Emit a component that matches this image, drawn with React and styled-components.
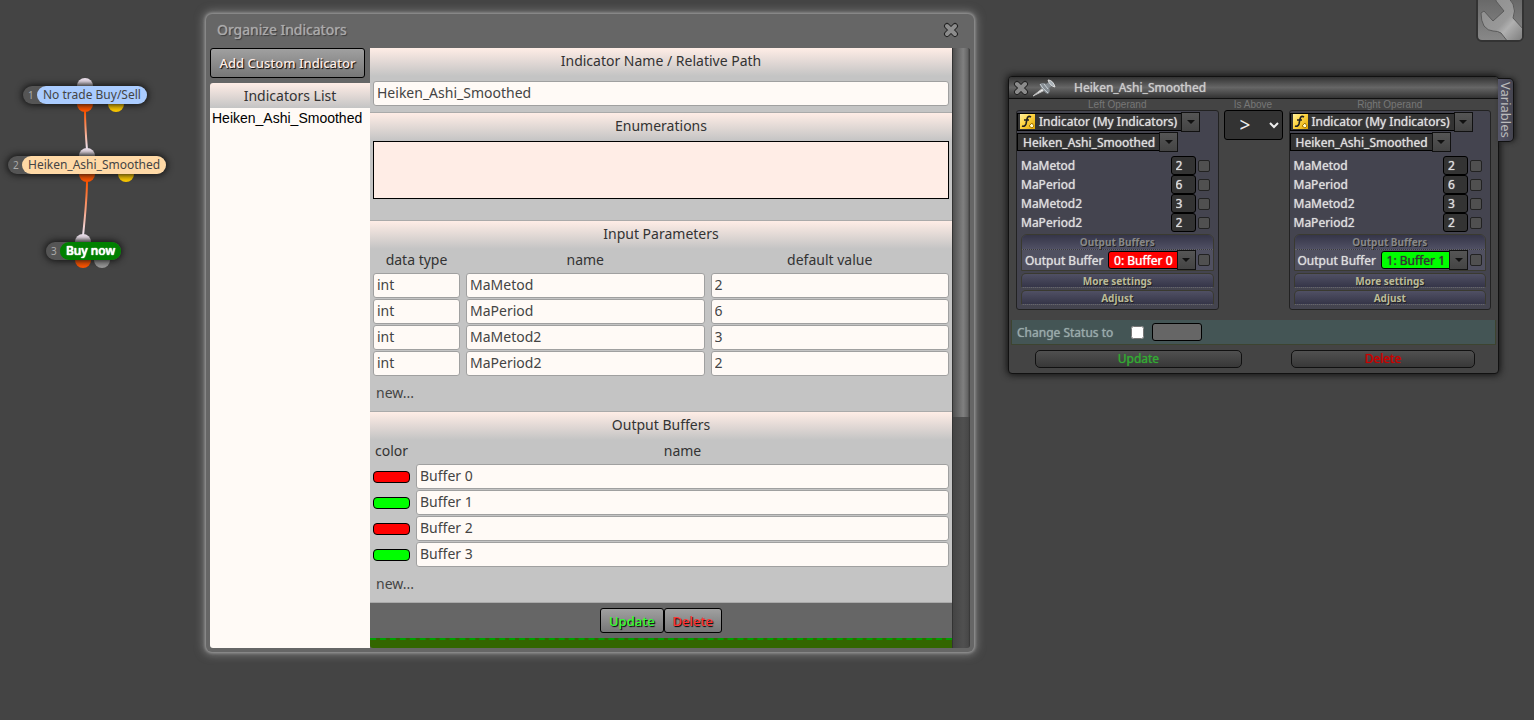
import React from "react";
import styled, { createGlobalStyle, css } from "styled-components";

const GlobalStyle = createGlobalStyle`
  * {
    box-sizing: border-box;
  }
  body {
    margin: 0;
    background-color: #444;
    font-family: "Noto Sans", "Open Sans", sans-serif;
    font-size: 14px;
  }
  button, input, select, textarea {
    font-family: inherit;
    margin: 0;
  }
`;

const Canvas = styled.main`
  position: relative;
  min-height: 100vh;
  overflow: hidden;
  background-color: #444;
`;

/* flow chart */

const Wires = styled.svg`
  position: absolute;
  left: 0;
  top: 0;
  width: 200px;
  height: 300px;
`;

const Block = styled.div`
  position: absolute;
  left: ${({ $x }) => $x}px;
  top: ${({ $y }) => $y}px;
  isolation: isolate;
`;

const BlockBody = styled.div`
  display: flex;
  height: 18px;
  border-radius: 9px;
  background-color: #555;
  box-shadow: 0 0 7px 1px #111;
`;

const BlockNumber = styled.span`
  width: 14px;
  padding-left: 5px;
  font-size: 10px;
  line-height: 18px;
  color: #aaa;
`;

const BlockLabel = styled.span`
  padding: 0 6px;
  border-radius: 9px;
  font-size: 12px;
  line-height: 18px;
  white-space: nowrap;
  color: ${({ $text }) => $text || "#444"};
  background-color: ${({ $color }) => $color};
  ${({ $bold }) =>
    $bold &&
    css`
      font-weight: 500;
      text-shadow: 0 0 1px #fff, 0 0 1px #fff;
    `}
`;

const Port = styled.span`
  position: absolute;
  z-index: -1;
  left: ${({ $x }) => $x}px;
  width: 16px;
  height: 16px;
  border-radius: 50%;
  ${({ $top }) => ($top ? "top: -8px;" : "bottom: -8px;")}
  background: ${({ $color }) => $color};
`;

/* organize indicators window */

const Organizer = styled.section`
  position: absolute;
  left: 206px;
  top: 14px;
  width: 768px;
  padding: 0 4px 4px;
  border-radius: 6px;
  background-color: #666;
  box-shadow: 0 0 3px 1px #999, 0 0 9px 3px #777;
`;

const OrganizerHeader = styled.header`
  display: flex;
  align-items: center;
  justify-content: space-between;
  height: 34px;
  padding: 0 11px 2px 7px;
`;

const OrganizerTitle = styled.h1`
  margin: 0;
  font-size: 14px;
  line-height: 20px;
  font-weight: 400;
  color: #aaa;
  text-shadow: 0 0 1px #aaa, 1px 1px 1px #333;
`;

const IconButton = styled.button`
  display: flex;
  padding: 0;
  border: 0;
  background: none;
`;

const OrganizerBody = styled.div`
  display: flex;
`;

const Sidebar = styled.aside`
  display: flex;
  flex-direction: column;
  width: 160px;
`;

const Button = styled.button`
  height: ${({ $tall }) => ($tall ? 30 : 25)}px;
  padding: 0 8px;
  border: 1px solid #000;
  border-radius: 3px;
  background: linear-gradient(#a0a0a0, #777);
  font-size: 13px;
  font-weight: 500;
  white-space: nowrap;
  color: ${({ $color }) => $color || "#ffede6"};
  text-shadow: 1px 1px 1px #000;
`;

const AddButton = styled(Button)`
  margin: 0 5px 5px 0;
`;

const ListTitle = styled.h2`
  margin: 0;
  border-radius: 3px 0 0 0;
  background: linear-gradient(#ffede6, #c4c4c4);
  font-size: 14px;
  font-weight: 400;
  line-height: 25px;
  text-align: center;
  color: #333;
`;

const List = styled.ul`
  flex: 1;
  margin: 0;
  padding: 0 2px;
  list-style: none;
  border-radius: 0 0 0 3px;
  background-color: #fffaf6;
  font-family: "Liberation Sans", Arial, sans-serif;
  font-size: 14px;
  line-height: 20px;
  color: #000;
`;

const Editor = styled.form`
  flex: 1;
`;

const Section = styled.section`
  padding-bottom: ${({ $bottom }) => $bottom}px;
  border-bottom: 1px solid #aaa;
  background-color: #c4c4c4;
`;

const SectionTitle = styled.h2`
  margin: 0;
  height: 28px;
  background: linear-gradient(#ffede6, #c4c4c4);
  font-size: 14px;
  font-weight: 400;
  line-height: 26px;
  text-align: center;
  color: #333;
`;

const FieldArea = styled.div`
  padding: ${({ $top }) => $top}px 3px 0;
`;

const TextField = styled.input`
  display: block;
  width: 100%;
  height: 25px;
  padding: 0 3px 2px;
  border: 1px solid #a0a0a0;
  border-radius: 3px;
  background-color: #fffaf6;
  font-size: 14px;
  color: #444;
`;

const EnumArea = styled.textarea`
  display: block;
  width: 100%;
  height: 58px;
  border: 1px solid #000;
  background-color: #ffede6;
  resize: none;
`;

const Table = styled.table`
  width: 100%;
  table-layout: fixed;
  border-collapse: collapse;

  th {
    height: 24px;
    padding: 0 3px 3px;
    font-weight: 400;
    line-height: 21px;
    color: #333;
  }
  td {
    height: 26px;
    padding: 0 3px 1px;
  }
`;

const Swatch = styled.button`
  display: block;
  width: 100%;
  height: 12px;
  padding: 0;
  border: 1px solid #000;
  border-radius: 4px;
  background-color: ${({ $color }) => $color};
`;

const NewLink = styled.a`
  display: block;
  margin: 5px 6px 0;
  line-height: 22px;
  color: #444;
  text-decoration: none;
`;

const EditorFooter = styled.footer`
  display: flex;
  justify-content: center;
  padding: 5px 0;
`;

const DropZone = styled.div`
  height: 10px;
  border-top: 2px dashed #00a000;
  border-radius: 0 0 0 3px;
  background-color: #360;
`;

const ScrollTrack = styled.div`
  width: 18px;
  border-left: 1px solid #333;
  border-radius: 0 3px 3px 0;
  background: linear-gradient(90deg, #444, #505050 60%, #484848 90%, #333);
`;

const ScrollThumb = styled.div`
  height: 369px;
  border-radius: 0 3px 0 0;
  background: linear-gradient(90deg, #505050, #808080 60%, #666 85%, #383838);
`;

/* condition window */

const Condition = styled.section`
  position: absolute;
  left: 1008px;
  top: 76px;
  width: 491px;
  border: 1px solid #111;
  border-radius: 4px;
  background-color: #444;
  box-shadow: 0 0 7px 1px #111;
`;

const ConditionHeader = styled.header`
  display: flex;
  align-items: center;
  height: 22px;
  padding-left: 4px;
  border-bottom: 1px solid #111;
  border-radius: 3px 3px 0 0;
  background: linear-gradient(#333, #666 50%, #333);
  color: #ddd;
`;

const softBold = css`
  font-weight: 400;
  text-shadow: 0 0 1px currentColor;
`;

const ConditionTitle = styled.h2`
  margin: 0 0 0 17px;
  font-size: 12px;
  line-height: 20px;
  color: #ccc;
  ${softBold}
`;

const Operands = styled.div`
  display: flex;
  padding: 0 7px;
`;

const Operand = styled.div`
  flex: 1;
`;

const Caption = styled.div`
  font-family: "Liberation Sans", Arial, sans-serif;
  font-size: 10px;
  line-height: 11px;
  text-align: center;
  color: #777;
`;

const OperandPanel = styled.div`
  height: 200px;
  border: 1px solid #222;
  border-radius: 3px;
  background-color: #44444f;
  color: #ddd;
  font-size: 12px;
`;

const Combo = styled.button`
  display: flex;
  align-items: center;
  height: ${({ $tall }) => ($tall ? 21 : 20)}px;
  padding: 0;
  border: 0;
  background: none;
  font-size: 12px;
  white-space: nowrap;
  color: #ddd;
  ${softBold}
`;

const ComboText = styled.span`
  display: flex;
  align-items: center;
  gap: 4px;
  height: 18px;
  padding: 0 4px 0 ${({ $icon }) => ($icon ? 2 : 5)}px;
  border: 1px solid #000;
  background-color: #333;
  ${({ $color }) =>
    $color &&
    css`
      border-radius: 3px 0 0 3px;
      background-color: ${$color};
    `}
  color: ${({ $text }) => $text || "#ddd"};
`;

const ComboArrow = styled.span`
  display: flex;
  align-items: center;
  justify-content: center;
  width: 19px;
  height: 20px;
  margin-left: -1px;
  border: 1px solid #111;
  background: linear-gradient(#555, #444);

  &::after {
    content: "";
    border: 4px solid transparent;
    border-top: 4px solid #111;
    border-bottom: 0;
  }
`;

const Params = styled.div`
  padding: 4px 8px 2px 4px;
`;

const Param = styled.label`
  display: flex;
  align-items: center;
  height: 19px;
  ${softBold}
`;

const ParamInput = styled.input`
  width: 25px;
  height: 19px;
  margin-left: auto;
  padding: 0 4px;
  border: 1px solid #000;
  border-radius: 3px;
  background-color: #333;
  font-size: 12px;
  color: #ddd;
  ${softBold}
`;

const Tick = styled.input`
  appearance: none;
  flex: none;
  width: 12px;
  height: 12px;
  margin-left: 2px;
  border: 1px solid #222;
  border-radius: 2px;
  background-color: #505050;
`;

const Group = styled.div`
  margin: 0 4px 2px;
  border: 1px solid #3a3a30;
  border-radius: 6px 6px 0 0;
  background-color: #505060;
`;

const barStyle = css`
  display: block;
  width: 100%;
  height: 15px;
  padding: 0;
  border: 0;
  border-bottom: 1px dotted #666;
  border-radius: 5px 5px 0 0;
  background: linear-gradient(#353548, #505064);
  font-family: "Noto Sans", sans-serif;
  font-size: 10px;
  font-weight: 700;
  line-height: 14px;
  text-align: center;
  text-shadow: 1px 1px #222;
`;

const GroupTitle = styled.div`
  ${barStyle}
  color: #888;
`;

const GroupRow = styled.div`
  display: flex;
  align-items: center;
  height: 20px;
  padding: 0 3px;
  ${softBold}

  ${Combo} {
    margin-left: auto;
  }
`;

const BarButtons = styled.div`
  display: flex;
  flex-direction: column;
  gap: 2px;
  padding: 0 4px;
`;

const BarButton = styled.button`
  ${barStyle}
  border: 1px solid #3a3a30;
  border-bottom: 1px dotted #666;
  background: linear-gradient(#505064, #353548);
  line-height: 12px;
  color: #bb9;
`;

const Comparison = styled.div`
  width: 70px;
  padding: 0 6px 0 5px;
`;

const CompareSelect = styled.select`
  width: 100%;
  height: 30px;
  padding: 0 0 0 11px;
  border: 1px solid #000;
  border-radius: 3px;
  background-color: #333;
  font-size: 19px;
  color: #eee;
`;

const StatusBar = styled.div`
  display: flex;
  align-items: center;
  height: 25px;
  margin: 10px 2px 5px;
  padding-left: 5px;
  border: 1px solid #3d4430;
  border-width: 0 1px 1px;
  background-color: #455;
  font-size: 12px;
  color: #9aa;
  ${softBold}
`;

const StatusCheck = styled.input`
  width: 13px;
  height: 13px;
  && {
    margin: 0 8px 0 18px;
  }
`;

const StatusInput = styled.input`
  width: 50px;
  height: 18px;
  border: 1px solid #000;
  border-radius: 3px;
  background-color: #666;
`;

const ConditionActions = styled.footer`
  display: flex;
  justify-content: space-between;
  gap: 49px;
  padding: 0 23px 5px 26px;
`;

const ActionButton = styled.button`
  flex: ${({ $grow }) => $grow} 1 0;
  height: 18px;
  padding: 0;
  border: 1px solid #111;
  border-radius: 5px;
  background: linear-gradient(#505050, #383838);
  font-size: 12px;
  line-height: 16px;
  color: ${({ $color }) => $color};
  ${softBold}
`;

const VariablesTab = styled.button`
  position: absolute;
  left: 100%;
  top: 1px;
  width: 16px;
  height: 64px;
  padding: 0;
  border: 1px solid #111;
  border-left: 0;
  border-radius: 0 5px 5px 0;
  background: linear-gradient(90deg, #555568, #44444f);
  writing-mode: vertical-rl;
  font-size: 13px;
  line-height: 14px;
  color: #bbb;
  box-shadow: 2px 0 5px #222;
`;

const SettingsButton = styled.button`
  position: absolute;
  left: 1476px;
  top: -6px;
  width: 48px;
  height: 48px;
  padding: 0;
  border: 2px solid #333;
  border-radius: 6px;
  background: linear-gradient(#666, #888);
  overflow: hidden;
`;

const CrossIcon = () => (
  <svg width="16" height="16" viewBox="0 0 16 16" aria-hidden="true">
    <path d="M4 4l8 8M12 4l-8 8" stroke="#222" strokeWidth="6" strokeLinecap="round" />
    <path d="M4 4l8 8M12 4l-8 8" stroke="#8c8c8c" strokeWidth="4" strokeLinecap="round" />
  </svg>
);

const PinIcon = () => (
  <svg width="28" height="18" viewBox="-4 0 28 18" aria-hidden="true">
    <path d="M0 17L10 9l2 2z" fill="#eee" stroke="#bbb" strokeWidth="1" />
    <path d="M7 5q3-2 6 0l3-2 3 4-3 2q2 3-1 6-3-1-5-4-3-3-3-6z" fill="#858c92" />
    <path d="M7 5q2 4 8 9M11 5l4 5" stroke="#c9d0d5" strokeWidth="1" fill="none" />
    <path d="M15 1q5 0 7 7-5-1-7-7z" fill="#a7b0b6" stroke="#ddd" strokeWidth="1" />
  </svg>
);

const FunctionIcon = () => (
  <svg width="15" height="15" viewBox="0 0 15 15" aria-hidden="true">
    <defs>
      <linearGradient id="gold" x1="0" y1="0" x2="1" y2="1">
        <stop offset="0" stopColor="#fff0a0" />
        <stop offset="0.4" stopColor="#ffd84a" />
        <stop offset="1" stopColor="#e0a400" />
      </linearGradient>
    </defs>
    <rect width="15" height="15" fill="url(#gold)" />
    <path
      d="M11 3Q8 1 7 5l-1 5q-1 3-4 2M4 6h5"
      stroke="#222"
      strokeWidth="1.6"
      fill="none"
    />
    <path d="M12 9l2 3-2 2-3-2z" fill="#fffbd0" stroke="#a87800" />
  </svg>
);

const WrenchIcon = () => (
  <svg width="44" height="44" viewBox="0 0 44 44" aria-hidden="true">
    <defs>
      <linearGradient id="steel" x1="0" y1="0" x2="1" y2="1">
        <stop offset="0" stopColor="#8c8c8c" />
        <stop offset="0.55" stopColor="#999" />
        <stop offset="0.66" stopColor="#b0b0b0" />
        <stop offset="1" stopColor="#777" />
      </linearGradient>
    </defs>
    <path
      d="M18 5L26 15 15 25 6 15 3 17Q3 25 6 30q4 5 9 5 5 0 8 2l7 9 16 0V34L35 22Q38 15 35 8 32 2 26-1L18 0z"
      fill="url(#steel)"
      stroke="#5a5a5a"
      strokeWidth="1"
    />
  </svg>
);

const silver = "linear-gradient(#efe3ef 20%, #999 60%)";

const blocks = [
  {
    id: 1,
    x: 23,
    y: 86,
    label: "No trade Buy/Sell",
    color: "#aaccff",
    ports: [
      { x: 54, top: true, color: silver },
      { x: 54, color: "#f50" },
      { x: 85, color: "#fc0" },
    ],
  },
  {
    id: 2,
    x: 8,
    y: 156,
    label: "Heiken_Ashi_Smoothed",
    color: "#ffd9a6",
    ports: [
      { x: 71, top: true, color: silver },
      { x: 71, color: "#f50" },
      { x: 110, color: "#fc0" },
    ],
  },
  {
    id: 3,
    x: 46,
    y: 242,
    label: "Buy now",
    color: "#008000",
    text: "#fff",
    bold: true,
    ports: [
      { x: 29, top: true, color: silver },
      { x: 29, color: "#f50" },
      { x: 48, color: "#999" },
    ],
  },
];

const params = [
  { name: "MaMetod", value: "2" },
  { name: "MaPeriod", value: "6" },
  { name: "MaMetod2", value: "3" },
  { name: "MaPeriod2", value: "2" },
];

const buffers = [
  { name: "Buffer 0", color: "#ff0000" },
  { name: "Buffer 1", color: "#00ff00" },
  { name: "Buffer 2", color: "#ff0000" },
  { name: "Buffer 3", color: "#00ff00" },
];

const FlowBlock = ({ block }) => (
  <Block $x={block.x} $y={block.y}>
    {block.ports.map((port, i) => (
      <Port key={i} $x={port.x} $top={port.top} $color={port.color} />
    ))}
    <BlockBody>
      <BlockNumber>{block.id}</BlockNumber>
      <BlockLabel $color={block.color} $text={block.text} $bold={block.bold}>
        {block.label}
      </BlockLabel>
    </BlockBody>
  </Block>
);

const OrganizeWindow = () => (
  <Organizer>
    <OrganizerHeader>
      <OrganizerTitle>Organize Indicators</OrganizerTitle>
      <IconButton aria-label="Close">
        <CrossIcon />
      </IconButton>
    </OrganizerHeader>
    <OrganizerBody>
      <Sidebar>
        <AddButton $tall>Add Custom Indicator</AddButton>
        <ListTitle>Indicators List</ListTitle>
        <List>
          <li>Heiken_Ashi_Smoothed</li>
        </List>
      </Sidebar>
      <Editor onSubmit={(e) => e.preventDefault()}>
        <Section $bottom={6}>
          <SectionTitle>Indicator Name / Relative Path</SectionTitle>
          <FieldArea $top={5}>
            <TextField
              aria-label="Indicator Name / Relative Path"
              defaultValue="Heiken_Ashi_Smoothed"
            />
          </FieldArea>
        </Section>
        <Section $bottom={21}>
          <SectionTitle>Enumerations</SectionTitle>
          <FieldArea $top={0}>
            <EnumArea aria-label="Enumerations" />
          </FieldArea>
        </Section>
        <Section $bottom={7}>
          <SectionTitle>Input Parameters</SectionTitle>
          <Table>
            <colgroup>
              <col width="93" />
              <col />
              <col />
            </colgroup>
            <thead>
              <tr>
                <th>data type</th>
                <th>name</th>
                <th>default value</th>
              </tr>
            </thead>
            <tbody>
              {params.map((p) => (
                <tr key={p.name}>
                  <td>
                    <TextField aria-label={`${p.name} type`} defaultValue="int" />
                  </td>
                  <td>
                    <TextField aria-label={`${p.name} name`} defaultValue={p.name} />
                  </td>
                  <td>
                    <TextField aria-label={`${p.name} default`} defaultValue={p.value} />
                  </td>
                </tr>
              ))}
            </tbody>
          </Table>
          <NewLink href="#">new...</NewLink>
        </Section>
        <Section $bottom={7}>
          <SectionTitle>Output Buffers</SectionTitle>
          <Table>
            <colgroup>
              <col width="43" />
              <col />
            </colgroup>
            <thead>
              <tr>
                <th>color</th>
                <th>name</th>
              </tr>
            </thead>
            <tbody>
              {buffers.map((b) => (
                <tr key={b.name}>
                  <td>
                    <Swatch type="button" aria-label={`${b.name} color`} $color={b.color} />
                  </td>
                  <td>
                    <TextField aria-label={`${b.name} name`} defaultValue={b.name} />
                  </td>
                </tr>
              ))}
            </tbody>
          </Table>
          <NewLink href="#">new...</NewLink>
        </Section>
        <EditorFooter>
          <Button $color="#3f3">Update</Button>
          <Button type="button" $color="#f33">
            Delete
          </Button>
        </EditorFooter>
        <DropZone />
      </Editor>
      <ScrollTrack>
        <ScrollThumb />
      </ScrollTrack>
    </OrganizerBody>
  </Organizer>
);

const OperandEditor = ({ title, buffer, color, text }) => (
  <Operand>
    <Caption>{title}</Caption>
    <OperandPanel>
      <Combo $tall>
        <ComboText $icon>
          <FunctionIcon />
          Indicator (My Indicators)
        </ComboText>
        <ComboArrow />
      </Combo>
      <Combo>
        <ComboText>Heiken_Ashi_Smoothed</ComboText>
        <ComboArrow />
      </Combo>
      <Params>
        {params.map((p) => (
          <Param key={p.name}>
            {p.name}
            <ParamInput defaultValue={p.value} />
            <Tick type="checkbox" aria-label={`Adjust ${p.name}`} />
          </Param>
        ))}
      </Params>
      <Group>
        <GroupTitle>Output Buffers</GroupTitle>
        <GroupRow>
          Output Buffer
          <Combo>
            <ComboText $color={color} $text={text}>
              {buffer}
            </ComboText>
            <ComboArrow />
          </Combo>
          <Tick type="checkbox" aria-label="Adjust output buffer" />
        </GroupRow>
      </Group>
      <BarButtons>
        <BarButton>More settings</BarButton>
        <BarButton>Adjust</BarButton>
      </BarButtons>
    </OperandPanel>
  </Operand>
);

const ConditionWindow = () => (
  <Condition>
    <ConditionHeader>
      <IconButton aria-label="Close">
        <CrossIcon />
      </IconButton>
      <IconButton aria-label="Pin">
        <PinIcon />
      </IconButton>
      <ConditionTitle>Heiken_Ashi_Smoothed</ConditionTitle>
    </ConditionHeader>
    <Operands>
      <OperandEditor title="Left Operand" buffer="0: Buffer 0" color="#f00" text="#fff" />
      <Comparison>
        <Caption>Is Above</Caption>
        <CompareSelect aria-label="Is Above" defaultValue=">">
          <option>&gt;</option>
          <option>&lt;</option>
        </CompareSelect>
      </Comparison>
      <OperandEditor title="Right Operand" buffer="1: Buffer 1" color="#0f0" text="#333" />
    </Operands>
    <StatusBar>
      <label htmlFor="status">Change Status to</label>
      <StatusCheck id="status" type="checkbox" />
      <StatusInput aria-label="New status" />
    </StatusBar>
    <ConditionActions>
      <ActionButton $grow={9} $color="#3a3">
        Update
      </ActionButton>
      <ActionButton $grow={8} $color="#c00">
        Delete
      </ActionButton>
    </ConditionActions>
    <VariablesTab>Variables</VariablesTab>
  </Condition>
);

const App = () => (
  <>
    <GlobalStyle />
    <Canvas>
      <Wires viewBox="0 0 200 300" aria-hidden="true">
        <defs>
          <linearGradient id="wireA" gradientUnits="userSpaceOnUse" x1="0" y1="112" x2="0" y2="148">
            <stop offset="0" stopColor="#f50" />
            <stop offset="1" stopColor="#efe3ef" />
          </linearGradient>
          <linearGradient id="wireB" gradientUnits="userSpaceOnUse" x1="0" y1="182" x2="0" y2="234">
            <stop offset="0" stopColor="#f50" />
            <stop offset="1" stopColor="#efe3ef" />
          </linearGradient>
        </defs>
        <path d="M85 110Q85 125 87 150" stroke="url(#wireA)" strokeWidth="2" fill="none" />
        <path d="M87 180Q87 198 83 236" stroke="url(#wireB)" strokeWidth="2" fill="none" />
      </Wires>
      {blocks.map((block) => (
        <FlowBlock key={block.id} block={block} />
      ))}
      <OrganizeWindow />
      <ConditionWindow />
      <SettingsButton aria-label="Settings">
        <WrenchIcon />
      </SettingsButton>
    </Canvas>
  </>
);

export default App;
